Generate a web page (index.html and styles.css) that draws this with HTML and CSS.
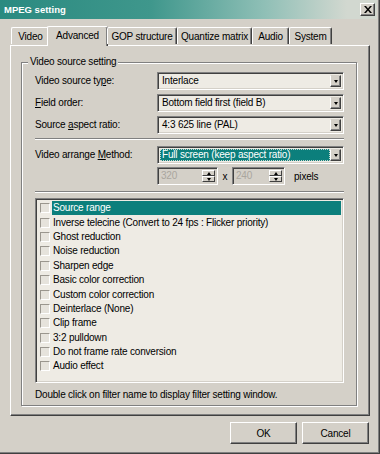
FILE: index.html
```html
<!DOCTYPE html>
<html lang="en">
<head>
    <meta charset="UTF-8">
    <title>MPEG setting</title>
    <link rel="stylesheet" href="styles.css">
</head>
<body>
    <div class="dialog">
        <div class="titlebar">
            <span class="title">MPEG setting</span>
            <button class="close-btn">
                <svg width="8" height="7" viewBox="0 0 8 7"><path d="M0 0h2l2 2.5L6 0h2L5 3.5 8 7H6L4 4.5 2 7H0l3-3.5z" fill="#000"/></svg>
            </button>
        </div>

        <div class="tabs">
            <div class="tab tab-video">Video</div>
            <div class="tab active">Advanced</div>
            <div class="tab tab-gop">GOP structure</div>
            <div class="tab tab-quant">Quantize matrix</div>
            <div class="tab tab-audio">Audio</div>
            <div class="tab tab-system">System</div>
        </div>

        <div class="panel">
            <div class="group">
                <div class="legend">Video source setting</div>

                <div class="form-row">
                    <label>Video source ty<u>p</u>e:</label>
                    <div class="combo"><span class="combo-text">Interlace</span><span class="combo-btn"><i class="arrow-down"></i></span></div>
                </div>
                <div class="form-row">
                    <label><u>F</u>ield order:</label>
                    <div class="combo"><span class="combo-text">Bottom field first (field B)</span><span class="combo-btn"><i class="arrow-down"></i></span></div>
                </div>
                <div class="form-row">
                    <label>Source <u>a</u>spect ratio:</label>
                    <div class="combo"><span class="combo-text">4:3 625 line (PAL)</span><span class="combo-btn"><i class="arrow-down"></i></span></div>
                </div>

                <div class="separator"></div>

                <div class="form-row arrange">
                    <label>Video arrange <u>M</u>ethod:</label>
                    <div class="combo"><span class="combo-text selected">Full screen (keep aspect ratio)</span><span class="combo-btn"><i class="arrow-down"></i></span></div>
                </div>
                <div class="form-row size-row">
                    <span></span>
                    <div class="size-fields">
                        <div class="spin wide"><span class="spin-text">320</span><span class="spin-btns"><span class="spin-btn"><i class="arrow-up"></i></span><span class="spin-btn"><i class="arrow-down"></i></span></span></div>
                        <span class="times">x</span>
                        <div class="spin"><span class="spin-text">240</span><span class="spin-btns"><span class="spin-btn"><i class="arrow-up"></i></span><span class="spin-btn"><i class="arrow-down"></i></span></span></div>
                        <span class="unit">pixels</span>
                    </div>
                </div>

                <div class="separator lower"></div>

                <ul class="filter-list">
                    <li class="current"><span class="check"></span><span class="name">Source range</span></li>
                    <li><span class="check"></span><span class="name">Inverse telecine (Convert to 24 fps : Flicker priority)</span></li>
                    <li><span class="check"></span><span class="name">Ghost reduction</span></li>
                    <li><span class="check"></span><span class="name">Noise reduction</span></li>
                    <li><span class="check"></span><span class="name">Sharpen edge</span></li>
                    <li><span class="check"></span><span class="name">Basic color correction</span></li>
                    <li><span class="check"></span><span class="name">Custom color correction</span></li>
                    <li><span class="check"></span><span class="name">Deinterlace (None)</span></li>
                    <li><span class="check"></span><span class="name">Clip frame</span></li>
                    <li><span class="check"></span><span class="name">3:2 pulldown</span></li>
                    <li><span class="check"></span><span class="name">Do not frame rate conversion</span></li>
                    <li><span class="check"></span><span class="name">Audio effect</span></li>
                </ul>

                <p class="hint">Double click on filter name to display filter setting window.</p>
            </div>
        </div>

        <div class="buttons">
            <button class="btn">OK</button>
            <button class="btn">Cancel</button>
        </div>
    </div>
</body>
</html>
```

FILE: styles.css
```css
* { margin: 0; padding: 0; box-sizing: border-box; }
body { font-family: 'Liberation Sans', Arial, sans-serif; font-size: 10px; letter-spacing: -0.2px; color: #000; background: #d4d0c8; }
.dialog { width: 380px; height: 454px; background: #d4d0c8; border-right: 1px solid #404040; border-bottom: 1px solid #404040; box-shadow: inset -1px -1px 0 #808080; }
.titlebar { height: 19px; margin-right: 2px; display: flex; align-items: center; justify-content: space-between; padding: 0 2px 0 4px; background: linear-gradient(to right, #2a8a80 0%, #3f978c 40%, #8fbfb6 70%, #d2d8d0 92%); }
.title { color: #fff; font-weight: bold; letter-spacing: 0; font-size: 9.5px; }
.close-btn { width: 15px; height: 13px; display: flex; align-items: center; justify-content: center; background: #d4d0c8; border: 1px solid; border-color: #fff #404040 #404040 #fff; box-shadow: inset -1px -1px 0 #808080; }

.tabs { display: flex; align-items: flex-end; height: 26px; padding: 7px 0 0 11px; position: relative; z-index: 1; }
.tab { height: 17px; padding-top: 3px; text-align: center; border-top: 1px solid #fff; border-left: 1px solid #fff; border-right: 1px solid #404040; box-shadow: inset -1px 0 0 #808080; border-radius: 2px 2px 0 0; white-space: nowrap; margin-bottom: 1px; }
.tab-video { width: 38px; border-right: none; box-shadow: none; }
.tab.active { width: 61px; height: 20px; margin: 0 -1px -1px -2px; background: #d4d0c8; }
.tab-gop { width: 70px; }
.tab-quant { width: 75px; }
.tab-audio { width: 37px; }
.tab-system { width: 43px; }

.panel { margin: 0 9px 0 10px; height: 371px; border: 1px solid; border-color: #fff #404040 #404040 #fff; box-shadow: inset -1px -1px 0 #808080; padding: 16px 12px 9px 10px; }

.group { position: relative; height: 100%; border: 1px solid #808080; box-shadow: 1px 1px 0 #fff, inset 1px 1px 0 #fff; padding: 9px 12px 0 13px; }
.legend { position: absolute; top: -7px; left: 6px; padding: 0 2px; background: #d4d0c8; line-height: 12px; }

.form-row { display: grid; grid-template-columns: 122px 1fr; align-items: center; height: 18px; margin-bottom: 4px; }
.form-row label { line-height: 12px; }
.form-row.arrange { margin: 6px 0 3px; }
.form-row.size-row { margin-bottom: 0; }

.combo { display: flex; height: 18px; background: #eeebe4; border: 1px solid; border-color: #808080 #fff #fff #808080; box-shadow: inset 1px 1px 0 #404040, inset -1px -1px 0 #d4d0c8; padding: 2px; }
.combo-text { flex: 1; padding-left: 2px; line-height: 12px; white-space: nowrap; overflow: hidden; }
.combo-text.selected { background: #0c7f7c; color: #fff; outline: 1px dotted #c9d7cf; outline-offset: -1px; }
.combo-btn { width: 11px; display: flex; align-items: center; justify-content: center; background: #d4d0c8; border: 1px solid; border-color: #d4d0c8 #404040 #404040 #fff; box-shadow: inset -1px -1px 0 #808080; }

.arrow-down { width: 0; height: 0; border-left: 2.5px solid transparent; border-right: 2.5px solid transparent; border-top: 3px solid #000; }
.arrow-up { width: 0; height: 0; border-left: 2.5px solid transparent; border-right: 2.5px solid transparent; border-bottom: 3px solid #000; }

.separator { height: 2px; border-top: 1px solid #808080; border-bottom: 1px solid #fff; }
.separator.lower { margin-top: 6px; }
.size-fields { display: flex; align-items: center; }
.spin { display: flex; width: 53px; height: 18px; background: #d4d0c8; border: 1px solid; border-color: #808080 #fff #fff #808080; box-shadow: inset 1px 1px 0 #404040, inset -1px -1px 0 #d4d0c8; padding: 2px; }
.spin.wide { width: 61px; }
.spin-text { flex: 1; padding-left: 1px; line-height: 12px; color: #aaa69e; }
.spin-btns { width: 13px; display: flex; flex-direction: column; }
.spin-btn { flex: 1; display: flex; align-items: center; justify-content: center; background: #d4d0c8; border: 1px solid; border-color: #fff #404040 #404040 #fff; }
.times { width: 14px; text-align: center; }
.unit { margin-left: 9px; }

.filter-list { list-style: none; margin-top: 5px; height: 185px; background: #eeebe4; border: 1px solid; border-color: #808080 #fff #fff #808080; box-shadow: inset 1px 1px 0 #404040, inset -1px -1px 0 #d4d0c8; padding: 2px 2px 0 2px; }
.filter-list li { display: flex; align-items: center; height: 14.4px; }
.check { width: 10px; height: 10px; margin: 0 2px; border: 1px solid; border-color: #9a968e #fff #fff #9a968e; background: #e6e3dc; flex-shrink: 0; }
.name { flex: 1; line-height: 14px; padding-left: 1px; white-space: nowrap; }
.filter-list li.current .name { background: #0c7f7c; color: #fff; }

.hint { margin-top: 6px; line-height: 12px; }

.buttons { display: flex; justify-content: flex-end; gap: 5px; padding: 6px 10px 0 0; }
.btn { width: 67px; height: 22px; font-family: inherit; font-size: 10px; letter-spacing: -0.2px; background: #d4d0c8; border: 1px solid; border-color: #fff #404040 #404040 #fff; box-shadow: inset -1px -1px 0 #808080; }
```
